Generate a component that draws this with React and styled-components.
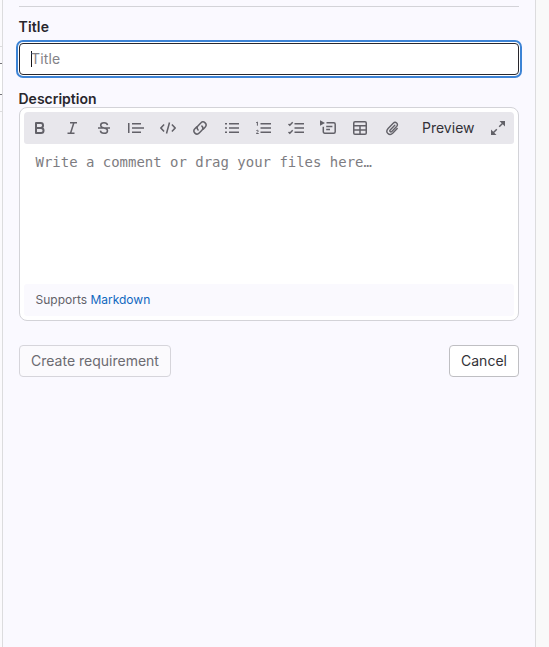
import React from "react";
import styled, { createGlobalStyle } from "styled-components";

const GlobalStyle = createGlobalStyle`
  * { box-sizing: border-box; }
  body { margin: 0; background: #f9f9f9; }
  button, input, textarea { font: inherit; margin: 0; }
`;

const Page = styled.div`
  display: grid;
  grid-template-columns: 2px 534px 1fr;
  width: 100%;
  height: 647px;
  overflow: hidden;
  font-family: Inter, "Liberation Sans", sans-serif;
  font-size: 14px;
  color: #28272d;
`;

const PageEdge = styled.div`
  padding-top: 46px;
  background: #fbfafd;
`;

const EdgeBar = styled.div`
  height: 66px;
  padding: 16px 0;
  border: solid #dcdcde;
  border-width: 1px 0;
`;

const EdgeField = styled.div`
  height: 32px;
  background: #fff;
  border: solid #737278;
  border-width: 1px 0;
`;

const Drawer = styled.aside`
  padding: 6px 16px 0;
  background: #faf9ff;
  border: solid #dcdcde;
  border-width: 0 1px;
`;

const Form = styled.form`
  display: flex;
  flex-direction: column;
  border-top: 1px solid #d3d3d8;
  padding-top: 10px;
`;

const Label = styled.label`
  margin-left: -0.5px;
  font-weight: 600;
  line-height: 20px;
  letter-spacing: ${(p) => p.$tracking || "0"};
`;

const TitleBox = styled.div`
  display: flex;
  align-items: center;
  height: 32px;
  margin: 6px 0 14px;
  padding: 0 11px;
  background: #fff;
  border: 1px solid #28272d;
  border-radius: 4px;
  box-shadow: 0 0 0 1px #fff, 0 0 0 3px #3c83d5;
`;

const Caret = styled.span`
  width: 1px;
  height: 16px;
  margin-right: -1px;
  background: #18171d;
`;

const TitleInput = styled.input`
  flex: 1;
  min-width: 0;
  padding: 0;
  border: 0;
  outline: 0;
  background: transparent;
  line-height: 20px;
  letter-spacing: 0.15px;
  &::placeholder { color: #838287; opacity: 1; }
`;

const Editor = styled.div`
  display: flex;
  flex-direction: column;
  height: 214px;
  margin-top: -2px;
  padding: 4px;
  background: #fff;
  border: 1px solid #d3d3d8;
  border-radius: 8px;
`;

const Toolbar = styled.div`
  display: flex;
  align-items: center;
  gap: 8px;
  height: 32px;
  padding: 0 4px;
  background: #e8e7ec;
  border-radius: 4px 4px 3px 3px;
`;

const Tool = styled.button`
  display: grid;
  place-items: center;
  width: 24px;
  height: 24px;
  padding: 0;
  border: 0;
  background: none;
  color: #626168;
`;

const PreviewButton = styled.button`
  flex: 1;
  padding: 0 0 1px 10px;
  border: 0;
  background: none;
  color: #333238;
  text-align: left;
  white-space: nowrap;
`;

const Comment = styled.textarea`
  flex: 1;
  padding: 8px 11.5px;
  border: 0;
  outline: 0;
  resize: none;
  background: transparent;
  font-family: "DejaVu Sans Mono", "Liberation Mono", monospace;
  font-size: 13.97px;
  line-height: 20px;
  &::placeholder { color: #7d7c81; opacity: 1; }
`;

const Footer = styled.div`
  height: 32px;
  padding: 0 11.5px;
  background: #faf9fe;
  border-radius: 3px;
  color: #626168;
  font-size: 12px;
  line-height: 32px;
`;

const Link = styled.a`
  color: #1068bf;
  text-decoration: none;
`;

const Actions = styled.div`
  display: flex;
  justify-content: space-between;
  margin-top: 24px;
`;

const Button = styled.button`
  width: ${(p) => p.$width};
  height: 32px;
  padding: 0 0 2px;
  border: 1px solid ${(p) => (p.$muted ? "#d6d5db" : "#bfbfc3")};
  border-radius: 4px;
  background: ${(p) => (p.$muted ? "#fbfafd" : "#fff")};
  color: ${(p) => (p.$muted ? "#6c6b71" : "#333238")};
  white-space: nowrap;
`;

const Glyph = styled.svg`
  display: block;
  width: 16px;
  height: 16px;
  fill: none;
  stroke: currentColor;
  stroke-width: 1.5;
`;

const tools = [
  ["Bold", <path d="M4 3h4.6a2.4 2.4 0 0 1 0 4.9H4zM4 7.9h5a2.55 2.55 0 0 1 0 5.1H4z" strokeWidth="2" strokeLinejoin="round" />],
  ["Italic", <path d="M6 2.75h7M3.5 13.25h7M9.8 3 6.6 13" />],
  ["Strikethrough", <path d="M2 8h12M11.5 5.2C11.3 3.6 10 2.75 8 2.75S4.7 3.7 4.7 5.3C4.7 7 6 7.5 8 8s3.5 1.1 3.5 2.7-1.4 2.6-3.5 2.6-3.4-.9-3.6-2.6" />],
  ["Quote", <path d="M.75 3v10M4 3.75h9M4 8h12M4 12.25h9" />],
  ["Code", <path d="M4.1 4.5.9 8l3.2 3.5M11.9 4.5 15.1 8l-3.2 3.5M9.5 2.5l-3 11" />],
  ["Link", <path d="M6.1 9.9a3 3 0 0 1 0-4.2l2.7-2.8a3.02 3.02 0 0 1 4.3 4.3l-1.9 1.9M9.9 6.1a3 3 0 0 1 0 4.2l-2.7 2.8a3.02 3.02 0 0 1-4.3-4.3l1.9-1.9" strokeLinecap="round" />],
  ["Bulleted list", <path d="M1 3.75h2M1 8h2M1 12.25h2M5 3.75h10M5 8h10M5 12.25h10" />],
  ["Numbered list", <><path d="M4.5 3.75H15M4.5 8H15M4.5 12.25H15" /><path d="M.2 2.7 1.4 2v3.7M.3 11c.3-1 2-.9 2 0 0 .7-1.5 1.4-2 2.5h2.4" strokeWidth="1" /></>],
  ["Task list", <path d="M6.5 3.75H16M6.5 8H16M6.5 12.25H16M.5 4l1.3 1.2L4.7 2.3M.5 12l1.3 1.2 2.9-2.9" />],
  ["Collapsible section", <><path d="M0 .3 5 3 0 5.7z" fill="currentColor" stroke="none" /><path d="M6.5 2.75h7.3c.8 0 1.4.6 1.4 1.4v7.6c0 .8-.6 1.5-1.4 1.5H4.7c-.8 0-1.4-.7-1.4-1.5V6.8M6.2 6.5h6.2M6.2 9.5H10" /></>],
  ["Table", <path d="M3 1.75h10c.7 0 1.25.55 1.25 1.25v10c0 .7-.55 1.25-1.25 1.25H3c-.7 0-1.25-.55-1.25-1.25V3c0-.7.55-1.25 1.25-1.25zM2 5.75h12M2 10h12M8 6v8" />],
  ["Attach file", <path d="m10.8 5.2-4.6 4.7c-1.1 1.2.5 2.7 1.6 1.6l4.8-5c2.2-2.5-1-5.6-3.4-3.3L4.1 8.5c-3.4 3.8 1.3 8.1 4.8 4.6l4.3-4.5" strokeWidth="1.4" strokeLinecap="round" />],
];

export default function App() {
  return (
    <>
      <GlobalStyle />
      <Page>
        <PageEdge>
          <EdgeBar><EdgeField /></EdgeBar>
        </PageEdge>
        <Drawer>
          <Form>
            <Label htmlFor="title" $tracking="0.15px">Title</Label>
            <TitleBox>
              <Caret />
              <TitleInput id="title" placeholder="Title" />
            </TitleBox>
            <Label htmlFor="description">Description</Label>
            <Editor>
              <Toolbar>
                {tools.map(([name, drawing]) => (
                  <Tool key={name} type="button" aria-label={name}>
                    <Glyph viewBox="0 0 16 16">{drawing}</Glyph>
                  </Tool>
                ))}
                <PreviewButton type="button">Preview</PreviewButton>
                <Tool type="button" aria-label="Full screen">
                  <Glyph viewBox="0 0 16 16">
                    <path d="M9.5 1h5.5v5.5zM1 9.5V15h5.5z" fill="currentColor" stroke="none" />
                    <path d="M13.5 2.5 9.2 6.8M2.5 13.5l4.3-4.3" />
                  </Glyph>
                </Tool>
              </Toolbar>
              <Comment id="description" placeholder="Write a comment or drag your files here…" />
              <Footer>Supports <Link>Markdown</Link></Footer>
            </Editor>
            <Actions>
              <Button type="button" $muted $width="152px">Create requirement</Button>
              <Button type="button" $width="70px">Cancel</Button>
            </Actions>
          </Form>
        </Drawer>
      </Page>
    </>
  );
}
